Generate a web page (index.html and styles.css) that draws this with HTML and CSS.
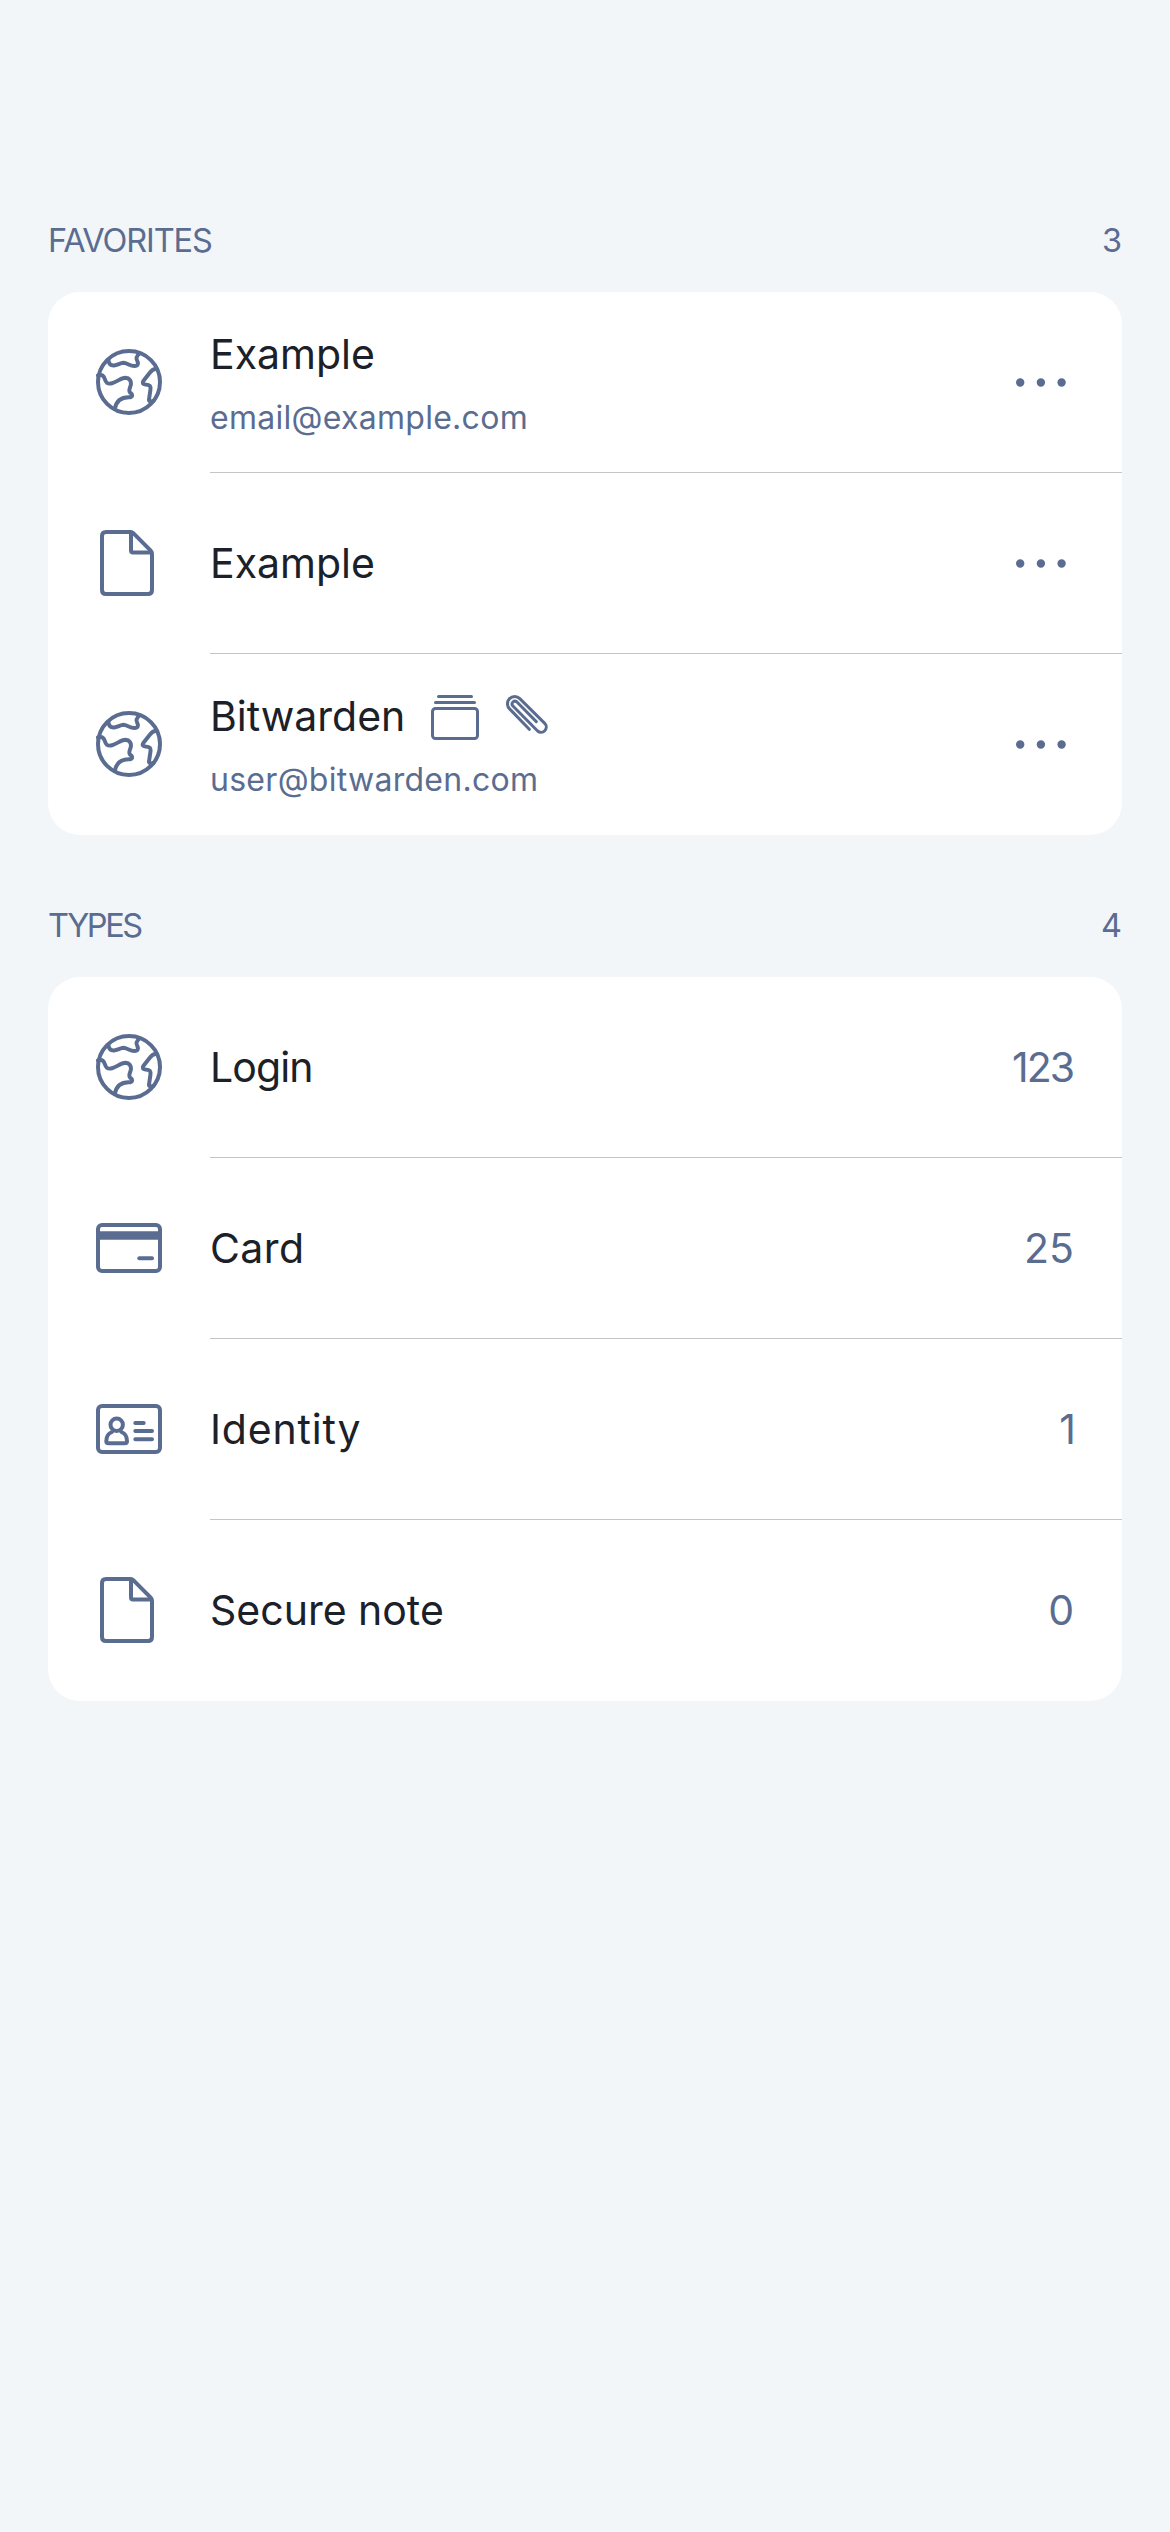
FILE: index.html
```html
<!DOCTYPE html>
<html lang="en">
<head>
<meta charset="utf-8">
<title>Vault</title>
<link rel="stylesheet" href="styles.css">
</head>
<body>
<svg class="sprite" aria-hidden="true">
  <symbol id="globe" viewBox="0 0 66 66">
    <circle cx="33" cy="33" r="31"/>
    <path d="M12.5 11.5C13 15 15 16.6 18 16.4C21.5 16.3 24 14 27.5 13.8C31 14 34 17.2 38.5 17.1C42 17 42.6 14.6 41.3 12C39.8 9.5 40 7.5 43.5 4.5"/>
    <path d="M2 26.5C6 25.2 7.8 26.5 9 30.5C10.2 34.5 12 35.3 16 34.3C21 33 24.5 28.8 29.5 28.8C33.5 29 35.5 32 34.8 36C33.8 39.5 32.3 41.5 34 43.5C37.5 46 36.2 48.2 33 48.3C26.5 48.2 20.5 50.5 18.8 60"/>
    <path d="M61 20.2C57.5 19.4 56 20.8 54 23.5L47.3 32C46 34 46.8 35.2 49.5 35.6C54 36 55 37 54.4 41L53 50.5C53 52.7 54.8 53 57.5 52"/>
  </symbol>
  <symbol id="note" viewBox="0 0 66 66">
    <path d="M10 2H34.5Q36.2 2 37.3 3.1L54.7 20.7Q56 22 56 24V60Q56 64 52 64H10Q6 64 6 60V6Q6 2 10 2Z"/>
    <path d="M35 2.5V20.5Q35 22.5 37 22.5H55.5"/>
  </symbol>
  <symbol id="card" viewBox="0 0 66 50">
    <rect x="2" y="2" width="62" height="46" rx="4"/>
    <path class="solid" d="M2 8.3H64V16.7H2Z"/>
    <path d="M43.3 35.3H56"/>
  </symbol>
  <symbol id="identity" viewBox="0 0 66 50">
    <rect x="2" y="2" width="62" height="46" rx="4"/>
    <circle cx="20.7" cy="20.7" r="6.2"/>
    <path d="M16 28C12 29.5 10.3 33 10.3 37Q10.3 39.3 12.6 39.3H28.7Q31 39.3 31 37C31 33 29.3 29.5 25.4 28"/>
    <path d="M39.3 19H47.7M39.3 27H56M39.3 35.3H56"/>
  </symbol>
  <symbol id="collection" viewBox="0 0 48 45">
    <path d="M7.5 1.5H40.5M4.5 7.5H43.5"/>
    <rect x="1.5" y="13.5" width="45" height="30" rx="3"/>
  </symbol>
  <symbol id="clip" viewBox="0 0 42 39">
    <path d="M23.3 34.3L3.6 13.9A7.2 7.2 0 0 1 13.8 3.6L39 28.6A5.25 5.25 0 0 1 31.6 36L6.7 10.8A2.85 2.85 0 0 1 10.7 6.8L30.3 26.6"/>
  </symbol>
  <symbol id="dots" viewBox="0 0 50 9">
    <path class="solid" d="M0 4.5a4.2 4.2 0 0 1 8.4 0a4.2 4.2 0 0 1-8.4 0ZM20.7 4.5a4.2 4.2 0 0 1 8.4 0a4.2 4.2 0 0 1-8.4 0ZM41.4 4.5a4.2 4.2 0 0 1 8.4 0a4.2 4.2 0 0 1-8.4 0Z"/>
  </symbol>
</svg>

<main class="vault">
  <section class="section">
    <header class="section-head"><h2 class="section-title tight">FAVORITES</h2><span>3</span></header>
    <ul class="list">
      <li class="row">
        <span class="lead"><svg class="icon"><use href="#globe"/></svg></span>
        <div class="body">
          <div class="text"><div class="name">Example</div><div class="sub">email@example.com</div></div>
          <svg class="more"><use href="#dots"/></svg>
        </div>
      </li>
      <li class="row">
        <span class="lead"><svg class="icon"><use href="#note"/></svg></span>
        <div class="body">
          <div class="name">Example</div>
          <svg class="more"><use href="#dots"/></svg>
        </div>
      </li>
      <li class="row">
        <span class="lead"><svg class="icon"><use href="#globe"/></svg></span>
        <div class="body">
          <div class="text">
            <div class="name">Bitwarden<svg class="icon-collection"><use href="#collection"/></svg><svg class="icon-clip"><use href="#clip"/></svg></div>
            <div class="sub">user@bitwarden.com</div>
          </div>
          <svg class="more"><use href="#dots"/></svg>
        </div>
      </li>
    </ul>
  </section>

  <section class="section">
    <header class="section-head"><h2 class="section-title tighter">TYPES</h2><span>4</span></header>
    <ul class="list">
      <li class="row">
        <span class="lead"><svg class="icon"><use href="#globe"/></svg></span>
        <div class="body"><div class="name name-login">Login</div><span class="count count-wide">123</span></div>
      </li>
      <li class="row">
        <span class="lead"><svg class="icon icon-wide"><use href="#card"/></svg></span>
        <div class="body"><div class="name name-card">Card</div><span class="count">25</span></div>
      </li>
      <li class="row">
        <span class="lead"><svg class="icon icon-wide"><use href="#identity"/></svg></span>
        <div class="body"><div class="name name-identity">Identity</div><span class="count count-one">1</span></div>
      </li>
      <li class="row">
        <span class="lead"><svg class="icon"><use href="#note"/></svg></span>
        <div class="body"><div class="name">Secure note</div><span class="count">0</span></div>
      </li>
    </ul>
  </section>
</main>
</body>
</html>
```
FILE: styles.css
```css
* { box-sizing: border-box; }

body {
  margin: 0;
  min-height: 2532px;
  background: #f2f6f9;
  color: #1b2029;
  font-family: Inter, "Liberation Sans", sans-serif;
  font-weight: 400;
}

.sprite { display: none; }

svg {
  display: block;
  flex: none;
  fill: none;
  stroke: #5a6d91;
  stroke-width: 4;
  stroke-linecap: round;
  stroke-linejoin: round;
}

.solid { fill: #5a6d91; stroke: none; }

.vault {
  display: flex;
  flex-direction: column;
  gap: 71px;
  padding: 221px 48px 0;
}

.section-head {
  display: flex;
  justify-content: space-between;
  height: 40px;
  margin-bottom: 31px;
  color: #5a6d91;
  font-size: 32.5px;
  line-height: 40px;
}

.section-title { margin: 0; font-size: inherit; font-weight: inherit; }
.tight { letter-spacing: -1.1px; }
.tighter { letter-spacing: -2.4px; }

.list {
  margin: 0;
  padding: 0;
  list-style: none;
  overflow: hidden;
  border-radius: 32px;
  background: #fff;
}

.row { display: flex; height: 181px; }

.lead {
  display: flex;
  flex: none;
  align-items: center;
  width: 162px;
  padding: 0 0 2px 48px;
}

.icon { width: 66px; height: 66px; }
.icon-wide { height: 50px; }

.body {
  display: flex;
  flex: 1;
  align-items: center;
  justify-content: space-between;
  padding-right: 48px;
  border-bottom: 1px solid #c5c5c7;
}

.row:last-child .body { border-bottom-color: transparent; }

.text { display: flex; flex-direction: column; gap: 19px; padding-top: 2px; }

.name {
  display: flex;
  align-items: center;
  height: 51px;
  font-size: 41px;
  line-height: 51px;
}

.name-login { letter-spacing: -0.9px; }
.name-card { letter-spacing: 0.4px; }
.name-identity { letter-spacing: 0.8px; }

.icon-collection {
  width: 48px;
  height: 45px;
  margin: 2px 0 0 26px;
  stroke-width: 3;
}

.icon-clip {
  width: 42px;
  height: 39px;
  margin: -4px 0 0 27px;
  stroke-width: 3;
}

.sub {
  height: 38px;
  color: #5a6d91;
  font-size: 32px;
  line-height: 38px;
  letter-spacing: 0.28px;
}

.more { width: 50px; height: 9px; margin-right: 8px; }

.count { color: #5a6d91; font-size: 41px; line-height: 51px; }
.count-wide { margin-right: 1px; letter-spacing: -2px; }
.count-one { margin-right: -2px; }
```
